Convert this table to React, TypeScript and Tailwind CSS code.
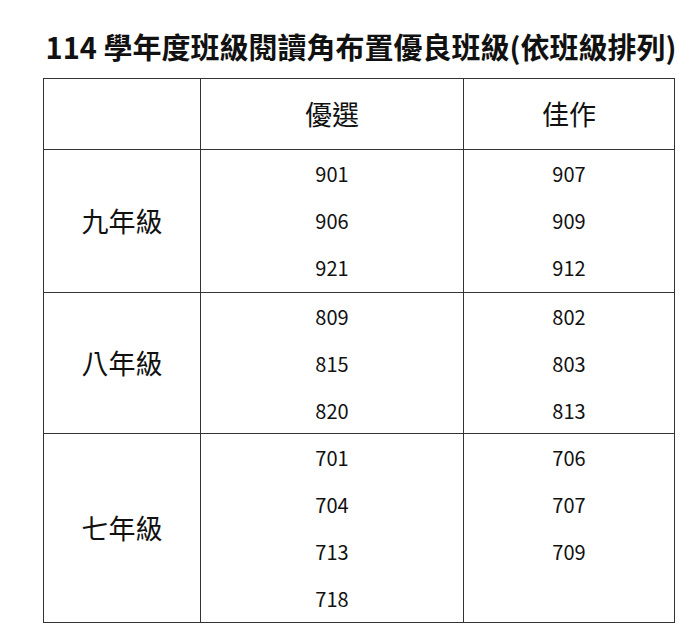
const rows = [
  { grade: "九年級", h: "h-[143px]", best: ["901", "906", "921"], good: ["907", "909", "912"] },
  { grade: "八年級", h: "h-[141px]", best: ["809", "815", "820"], good: ["802", "803", "813"] },
  { grade: "七年級", h: "h-[189px]", best: ["701", "704", "713", "718"], good: ["706", "707", "709"] },
];

const NumList = ({ items }: { items: string[] }) => (
  <div className="flex flex-col">
    {items.map((n) => (
      <div key={n} className="h-[47px] leading-[47px] text-[20px] text-center">
        {n}
      </div>
    ))}
  </div>
);

export default function App() {
  return (
    <div
      className="w-[700px] h-[642px] bg-white text-[#111] pt-[28px]"
      style={{ fontFamily: '"Noto Sans CJK TC", "Noto Sans", sans-serif' }}
    >
      <h1 className="h-[36px] leading-[36px] text-center pl-[22px] text-[29px] font-bold">
        114 學年度班級閱讀角布置優良班級(依班級排列)
      </h1>

      <div className="mt-[14px] ml-[43px] w-[632px] grid grid-cols-[157px_263px_211px] border-l border-t border-[#333]">
        <div className="h-[71px] border-r border-b border-[#333]" />
        <div className="h-[71px] border-r border-b border-[#333] flex items-center justify-center text-[27px]">
          優選
        </div>
        <div className="h-[71px] border-r border-b border-[#333] flex items-center justify-center text-[27px]">
          佳作
        </div>

        {rows.map((r) => (
          <div key={r.grade} className="contents">
            <div className={`${r.h} border-r border-b border-[#333] flex items-center justify-center text-[27px]`}>
              {r.grade}
            </div>
            <div className={`${r.h} border-r border-b border-[#333]`}>
              <NumList items={r.best} />
            </div>
            <div className={`${r.h} border-r border-b border-[#333]`}>
              <NumList items={r.good} />
            </div>
          </div>
        ))}
      </div>
    </div>
  );
}
